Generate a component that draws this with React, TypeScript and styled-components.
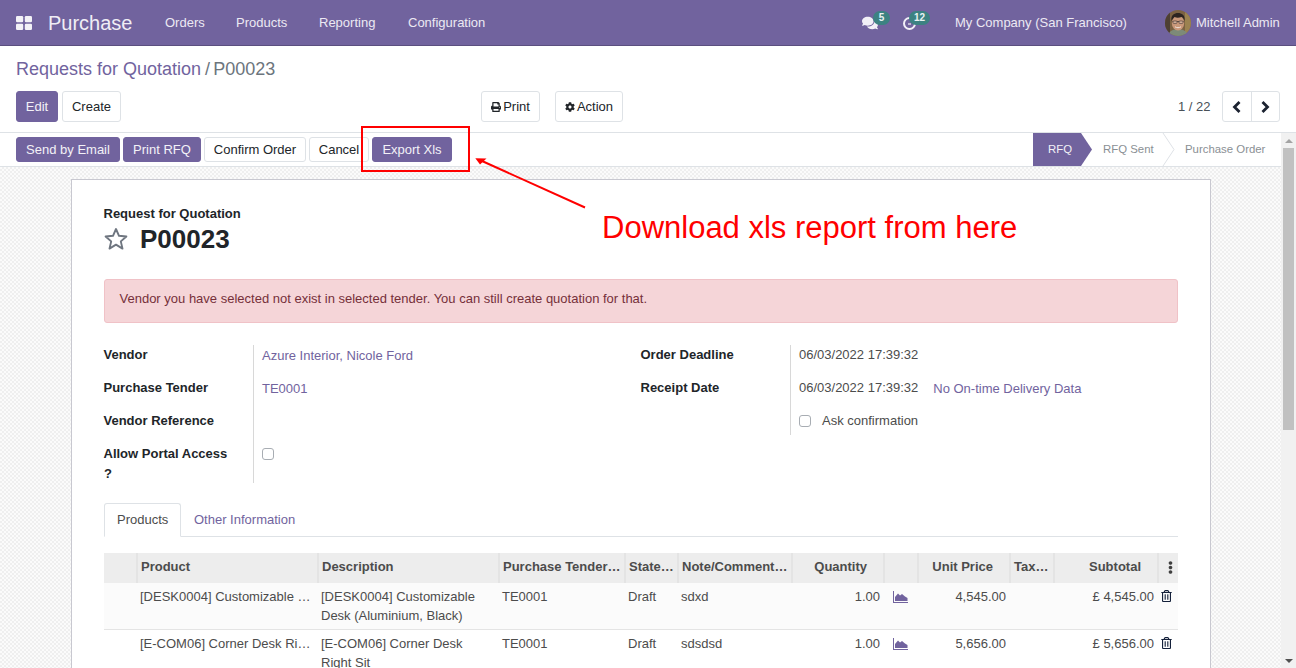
import React from "react";
import styled, { createGlobalStyle, css } from "styled-components";
import { FaPrint, FaCog, FaRegTrashAlt, FaEllipsisV, FaComments } from "react-icons/fa";

const PURPLE = "#71639e";
const TEXT = "#4c4c4c";

const Global = createGlobalStyle`
  html, body { margin: 0; padding: 0; height: 668px; overflow: hidden; background: #fff; }
  body { font-family: "Liberation Sans", Arial, sans-serif; font-size: 13px; line-height: 1.5; color: ${TEXT}; }
  * { box-sizing: border-box; }
`;

const Page = styled.div`
  position: relative;
  width: 1296px;
  height: 668px;
  overflow: hidden;
`;

const Navbar = styled.header`
  height: 46px;
  background: ${PURPLE};
  border-bottom: 1px solid #5b4f7f;
  color: #fff;
  display: flex;
  align-items: center;
  position: relative;
`;
const AppsIcon = styled.svg`
  width: 16px;
  height: 14px;
  margin-left: 16px;
  margin-top: 1px;
  fill: #fff;
  opacity: 0.92;
`;
const Brand = styled.span`
  font-size: 20px;
  margin-left: 16px;
  width: 117px;
  color: #f0eef5;
`;
const NavItem = styled.span<{ $w: number }>`
  width: ${(p) => p.$w}px;
  color: #ece9f3;
  white-space: nowrap;
`;
const NavRight = styled.div`
  position: absolute;
  inset: 0;
  pointer-events: none;
`;
const NavIcon = styled.span<{ $x: number }>`
  position: absolute;
  left: ${(p) => p.$x}px;
  top: 15px;
  display: flex;
  color: #f2f0f7;
`;
const Badge = styled.span<{ $x: number; $w: number }>`
  position: absolute;
  left: ${(p) => p.$x}px;
  top: 11px;
  width: ${(p) => p.$w}px;
  height: 14px;
  border-radius: 7px;
  background: #3c8282;
  color: #e9f3f3;
  font-size: 10px;
  font-weight: 700;
  line-height: 13px;
  text-align: center;
`;
const NavText = styled.span<{ $x: number }>`
  position: absolute;
  left: ${(p) => p.$x}px;
  top: 13px;
  color: #ece9f3;
  white-space: nowrap;
`;
const Avatar = styled.svg`
  position: absolute;
  left: 1165px;
  top: 10px;
  width: 26px;
  height: 26px;
`;

const ControlPanel = styled.section`
  height: 87px;
  padding: 11px 16px 0;
  border-bottom: 1px solid #dee2e6;
  position: relative;
`;
const Breadcrumb = styled.div`
  font-size: 18px;
  line-height: 25px;
  height: 34px;
  white-space: nowrap;
`;
const CrumbLink = styled.span`
  color: ${PURPLE};
`;
const CrumbSep = styled.span`
  color: #6c757d;
  margin: 0 3px 0 4px;
`;
const CrumbCurrent = styled.span`
  color: #6c757d;
`;
const ButtonRow = styled.div`
  display: flex;
  align-items: flex-start;
  gap: 4px;
`;
const Btn = styled.button<{ $primary?: boolean; $h?: number; $w: number }>`
  font: inherit;
  height: ${(p) => p.$h ?? 31}px;
  width: ${(p) => p.$w}px;
  padding: 0;
  border-radius: 3px;
  white-space: nowrap;
  display: inline-flex;
  align-items: center;
  justify-content: center;
  gap: 2px;
  ${(p) =>
    p.$primary
      ? css`
          background: ${PURPLE};
          border: 1px solid ${PURPLE};
          color: #f3f1f7;
        `
      : css`
          background: #fff;
          border: 1px solid #dee2e6;
          color: #212529;
        `}
`;
const ActionGroup = styled.div`
  position: absolute;
  left: 481px;
  top: 45px;
  display: flex;
  gap: 15px;
`;
const Pager = styled.div`
  position: absolute;
  left: 1178px;
  top: 45px;
  display: flex;
  align-items: center;
  height: 31px;
`;
const PagerValue = styled.span`
  width: 44px;
  color: #495057;
`;
const PagerGroup = styled.div`
  display: flex;
  width: 58px;
  height: 31px;
  border: 1px solid #dee2e6;
  border-radius: 3px;
`;
const PagerBtn = styled.span<{ $divider?: boolean }>`
  flex: 1;
  display: flex;
  align-items: center;
  justify-content: center;
  color: #212529;
  ${(p) => p.$divider && "border-right: 1px solid #dee2e6;"}
`;
const ChevronSvg = styled.svg`
  width: 10px;
  height: 12px;
  fill: none;
  stroke: #1b2230;
  stroke-width: 2.8;
`;

const Scroller = styled.div`
  position: absolute;
  left: 0;
  top: 133px;
  width: 1281px;
  height: 535px;
  overflow: hidden;
  background-color: #fff;
`;
const StatusBar = styled.div`
  height: 34px;
  border-bottom: 1px solid #dee2e6;
  background: #fff;
  display: flex;
  justify-content: space-between;
  padding-left: 16px;
`;
const StatusButtons = styled.div`
  display: flex;
  gap: 3px;
  padding-top: 4px;
`;
const Stages = styled.div`
  display: flex;
  position: relative;
  width: 248px;
  height: 33px;
`;
const StagesArt = styled.svg`
  position: absolute;
  inset: 0;
  width: 248px;
  height: 33px;
`;
const Stage = styled.span<{ $x: number; $active?: boolean }>`
  position: absolute;
  left: ${(p) => p.$x}px;
  top: 7px;
  font-size: 11.4px;
  line-height: 18px;
  white-space: nowrap;
  color: ${(p) => (p.$active ? "#f3f1f7" : "#8a8f94")};
`;
const SheetBg = styled.div`
  height: 501px;
  padding: 12px 70px 0 71px;
  background-color: #fff;
  background-image: repeating-conic-gradient(#efefef 0 25%, #fbfbfb 0 50%);
  background-size: 4px 4px;
`;
const Sheet = styled.main`
  width: 1140px;
  height: 560px;
  background: #fff;
  border: 1px solid #c8c8d0;
  padding: 24px 32px 0;
`;
const TitleLabel = styled.div`
  font-weight: 700;
  color: #212529;
  line-height: 19px;
  margin-left: -0.5px;
`;
const TitleRow = styled.div`
  display: flex;
  align-items: center;
  height: 32px;
`;
const StarSvg = styled.svg`
  width: 24px;
  height: 24px;
  fill: none;
  stroke: #6f7680;
  stroke-width: 1.9;
  stroke-linejoin: round;
  margin-top: -1px;
`;
const TitleName = styled.h1`
  margin: 0 0 0 12px;
  font-size: 26px;
  font-weight: 700;
  line-height: 32px;
  color: #212529;
`;
const Alert = styled.div`
  margin-top: 24px;
  height: 44px;
  background: #f5d5d8;
  border: 1px solid #f0c2c7;
  border-radius: 3px;
  padding: 9px 15px 9px 14.5px;
  color: #76303a;
`;
const FormGrid = styled.div`
  display: flex;
  margin-top: 22px;
`;
const FormCol = styled.div<{ $w: number; $labelW: number }>`
  width: ${(p) => p.$w}px;
  display: grid;
  grid-template-columns: ${(p) => p.$labelW}px 1fr;
  align-content: start;
`;
const Label = styled.div<{ $short?: boolean }>`
  font-weight: 700;
  color: #212529;
  padding: 0 16px 0 0;
  min-height: ${(p) => (p.$short ? 24 : 33)}px;
  line-height: 19.5px;
  border-right: 1px solid #d8d8d8;
  text-indent: -0.5px;
`;
const Value = styled.div<{ $short?: boolean }>`
  padding: 0 0 0 8px;
  min-height: ${(p) => (p.$short ? 24 : 33)}px;
  line-height: 20px;
  display: flex;
  gap: 15px;
  white-space: nowrap;
`;
const LinkValue = styled.span`
  color: ${PURPLE};
  position: relative;
  top: 1px;
`;
const Check = styled.span`
  display: inline-block;
  width: 12px;
  height: 12px;
  margin-top: 4px;
  border: 1px solid #a8adb3;
  border-radius: 3px;
  background: #fff;
`;
const CheckLabel = styled.span`
  margin-left: -4px;
`;
const Tabs = styled.nav`
  display: flex;
  margin-top: 20px;
  height: 34px;
  border-bottom: 1px solid #dee2e6;
`;
const Tab = styled.span<{ $active?: boolean }>`
  height: 34px;
  padding: 6px 12px;
  white-space: nowrap;
  border: 1px solid ${(p) => (p.$active ? "#dee2e6" : "transparent")};
  border-bottom-color: ${(p) => (p.$active ? "#fff" : "transparent")};
  border-radius: 3px 3px 0 0;
  color: ${(p) => (p.$active ? TEXT : PURPLE)};
  background: ${(p) => (p.$active ? "#fff" : "transparent")};
  width: ${(p) => (p.$active ? "77px" : "auto")};
`;
const Table = styled.table`
  margin-top: 16px;
  width: 1074px;
  table-layout: fixed;
  border-collapse: collapse;
`;
const Col = styled.col<{ $w: number }>`
  width: ${(p) => p.$w}px;
`;
const Th = styled.th<{ $right?: boolean; $pr?: number }>`
  height: 30px;
  background: #ededed;
  padding: 0 ${(p) => p.$pr ?? (p.$right ? 16 : 2)}px 2px 3px;
  text-align: ${(p) => (p.$right ? "right" : "left")};
  font-weight: 700;
  color: ${TEXT};
  white-space: nowrap;
  overflow: hidden;
  text-overflow: ellipsis;
  border-left: 2px solid #e4e4e4;
  &:first-child {
    border-left: 0;
  }
`;
const Tr = styled.tr<{ $tinted?: boolean }>`
  background: ${(p) => (p.$tinted ? "#fbfbfb" : "#fff")};
  border-bottom: 1px solid #e4e4e4;
`;
const Td = styled.td<{ $right?: boolean; $nowrap?: boolean }>`
  vertical-align: top;
  padding: 4px ${(p) => (p.$right ? "4px" : "3px")} 4px 3px;
  line-height: 19px;
  text-align: ${(p) => (p.$right ? "right" : "left")};
  color: ${TEXT};
  ${(p) =>
    p.$nowrap &&
    css`
      white-space: nowrap;
      overflow: hidden;
      text-overflow: ellipsis;
    `}
`;
const ChartSvg = styled.svg`
  width: 15px;
  height: 12px;
  margin: 4px 0 0 6px;
  display: block;
  fill: ${PURPLE};
`;
const TrashIcon = styled(FaRegTrashAlt)`
  width: 11px;
  height: 12px;
  color: #14203a;
  display: block;
  margin: 3px 0 0 0;
`;
const KebabIcon = styled(FaEllipsisV)`
  width: 13px;
  height: 13px;
  color: #3f3f3f;
  display: block;
  margin-left: 2px;
`;

const ScrollTrack = styled.div`
  position: absolute;
  left: 1281px;
  top: 133px;
  width: 15px;
  height: 535px;
  background: #f1f1f1;
`;
const ScrollThumb = styled.div`
  position: absolute;
  left: 2px;
  top: 15px;
  width: 11px;
  height: 282px;
  background: #c1c1c1;
`;
const ScrollArrow = styled.span<{ $down?: boolean }>`
  position: absolute;
  left: 4px;
  width: 0;
  height: 0;
  border-left: 4px solid transparent;
  border-right: 4px solid transparent;
  ${(p) =>
    p.$down
      ? css`
          bottom: 5px;
          border-top: 4px solid #505050;
        `
      : css`
          top: 6px;
          border-bottom: 4px solid #a3a3a3;
        `}
`;

const Highlight = styled.div`
  position: absolute;
  left: 361px;
  top: 126px;
  width: 109px;
  height: 46px;
  border: 2px solid #ff0000;
`;
const Arrow = styled.svg`
  position: absolute;
  left: 470px;
  top: 150px;
  width: 120px;
  height: 62px;
`;
const Annotation = styled.div`
  position: absolute;
  left: 602px;
  top: 210px;
  font-size: 31px;
  line-height: 36px;
  color: #ff0000;
  white-space: nowrap;
`;

const widths = [33, 181, 181, 126, 53, 114, 92, 34, 92, 44, 104, 20];

const rows = [
  {
    product: "[DESK0004] Customizable Desk (Aluminium, Black)",
    desc: "[DESK0004] Customizable Desk (Aluminium, Black)",
    note: "sdxd",
    price: "4,545.00",
    sub: "£ 4,545.00",
  },
  {
    product: "[E-COM06] Corner Desk Right Sit",
    desc: "[E-COM06] Corner Desk Right Sit",
    note: "sdsdsd",
    price: "5,656.00",
    sub: "£ 5,656.00",
  },
];

const ChartIcon = () => (
  <ChartSvg viewBox="0 0 15 12">
    <path d="M0 0H1V11H15V12H0z" />
    <path d="M2 10V6L5 2.5L7 4.5L9 3L12 5.5L14.5 7V10z" />
  </ChartSvg>
);

export default function App() {
  return (
    <Page>
      <Global />
      <Navbar>
        <AppsIcon viewBox="0 0 16 14">
          <rect x="0" y="0" width="7.2" height="6.2" rx="1.2" />
          <rect x="8.8" y="0" width="7.2" height="6.2" rx="1.2" />
          <rect x="0" y="7.8" width="7.2" height="6.2" rx="1.2" />
          <rect x="8.8" y="7.8" width="7.2" height="6.2" rx="1.2" />
        </AppsIcon>
        <Brand>Purchase</Brand>
        <NavItem $w={71}>Orders</NavItem>
        <NavItem $w={83}>Products</NavItem>
        <NavItem $w={89}>Reporting</NavItem>
        <NavItem $w={90}>Configuration</NavItem>
        <NavRight>
          <NavIcon $x={862}>
            <FaComments size={16} />
          </NavIcon>
          <Badge $x={873} $w={17}>5</Badge>
          <NavIcon $x={902}>
            <svg width="14" height="16" viewBox="0 0 14 16" fill="none" stroke="#f2f0f7" strokeWidth="2">
              <circle cx="7.5" cy="8.5" r="5.5" />
              <path d="M6 9h3" strokeWidth="1.2" />
            </svg>
          </NavIcon>
          <Badge $x={909} $w={21}>12</Badge>
          <NavText $x={955}>My Company (San Francisco)</NavText>
          <Avatar viewBox="0 0 26 26">
            <defs>
              <clipPath id="av">
                <circle cx="13" cy="13" r="13" />
              </clipPath>
            </defs>
            <g clipPath="url(#av)">
              <rect width="26" height="26" fill="#7c6242" />
              <rect x="20" width="6" height="26" fill="#9b8250" />
              <rect width="5" height="26" fill="#4d3f33" />
              <path d="M3 26c1-5 5-7 10-7s9 2 10 7z" fill="#7d8a78" />
              <ellipse cx="13" cy="13" rx="6.2" ry="7.5" fill="#c9987a" />
              <path d="M6.5 11c-1-6 3-8 6.5-8s7.5 2 6.5 8c-1-3-2-4-3-4-2.5 1-5 1-7 0-1 1-2 2-3 4z" fill="#2c2420" />
              <path d="M7.5 11.5h11" stroke="#3a3230" strokeWidth="0.7" />
              <rect x="8" y="11" width="4" height="2.4" rx="0.8" fill="#d9b49c" stroke="#3a3230" strokeWidth="0.6" />
              <rect x="14" y="11" width="4" height="2.4" rx="0.8" fill="#d9b49c" stroke="#3a3230" strokeWidth="0.6" />
              <path d="M10 16.8c2 1.2 4 1.2 6 0" stroke="#f1e3da" strokeWidth="1" fill="none" />
            </g>
          </Avatar>
          <NavText $x={1196}>Mitchell Admin</NavText>
        </NavRight>
      </Navbar>

      <ControlPanel>
        <Breadcrumb>
          <CrumbLink>Requests for Quotation</CrumbLink>
          <CrumbSep>/</CrumbSep>
          <CrumbCurrent>P00023</CrumbCurrent>
        </Breadcrumb>
        <ButtonRow>
          <Btn $primary $w={42}>Edit</Btn>
          <Btn $w={59}>Create</Btn>
        </ButtonRow>
        <ActionGroup>
          <Btn $w={59}>
            <FaPrint size={10} /> Print
          </Btn>
          <Btn $w={68}>
            <FaCog size={10} /> Action
          </Btn>
        </ActionGroup>
        <Pager>
          <PagerValue>1 / 22</PagerValue>
          <PagerGroup>
            <PagerBtn $divider>
              <ChevronSvg viewBox="0 0 10 12">
                <path d="M7.5 1L2.5 6L7.5 11" />
              </ChevronSvg>
            </PagerBtn>
            <PagerBtn>
              <ChevronSvg viewBox="0 0 10 12">
                <path d="M2.5 1L7.5 6L2.5 11" />
              </ChevronSvg>
            </PagerBtn>
          </PagerGroup>
        </Pager>
      </ControlPanel>

      <Scroller>
        <StatusBar>
          <StatusButtons>
            <Btn $primary $h={25} $w={104}>Send by Email</Btn>
            <Btn $primary $h={25} $w={78}>Print RFQ</Btn>
            <Btn $h={25} $w={102}>Confirm Order</Btn>
            <Btn $h={25} $w={60}>Cancel</Btn>
            <Btn $primary $h={25} $w={80}>Export Xls</Btn>
          </StatusButtons>
          <Stages>
            <StagesArt viewBox="0 0 248 33">
              <path d="M0 0H48L59 16.5L48 33H0z" fill={PURPLE} />
              <path d="M130 0L141 16.5L130 33" fill="none" stroke="#dee2e6" />
            </StagesArt>
            <Stage $x={15} $active>RFQ</Stage>
            <Stage $x={70}>RFQ Sent</Stage>
            <Stage $x={152}>Purchase Order</Stage>
          </Stages>
        </StatusBar>
        <SheetBg>
          <Sheet>
            <TitleLabel>Request for Quotation</TitleLabel>
            <TitleRow>
              <StarSvg viewBox="0 0 24 24">
                <path d="M12 2l3 6.8 7.4.7-5.6 4.9 1.7 7.2L12 17.6 5.5 21.6l1.7-7.2L1.6 9.5l7.4-.7z" />
              </StarSvg>
              <TitleName>P00023</TitleName>
            </TitleRow>
            <Alert>Vendor you have selected not exist in selected tender. You can still create quotation for that.</Alert>
            <FormGrid>
              <FormCol $w={537} $labelW={150}>
                <Label>Vendor</Label>
                <Value><LinkValue>Azure Interior, Nicole Ford</LinkValue></Value>
                <Label>Purchase Tender</Label>
                <Value><LinkValue>TE0001</LinkValue></Value>
                <Label>Vendor Reference</Label>
                <Value />
                <Label>Allow Portal Access ?</Label>
                <Value><Check /></Value>
              </FormCol>
              <FormCol $w={537} $labelW={150}>
                <Label>Order Deadline</Label>
                <Value>06/03/2022 17:39:32</Value>
                <Label>Receipt Date</Label>
                <Value>
                  06/03/2022 17:39:32
                  <LinkValue>No On-time Delivery Data</LinkValue>
                </Value>
                <Label $short />
                <Value $short>
                  <Check />
                  <CheckLabel>Ask confirmation</CheckLabel>
                </Value>
              </FormCol>
            </FormGrid>
            <Tabs>
              <Tab $active>Products</Tab>
              <Tab>Other Information</Tab>
            </Tabs>
            <Table>
              <colgroup>
                {widths.map((w, i) => (
                  <Col key={i} $w={w} />
                ))}
              </colgroup>
              <thead>
                <tr>
                  <Th />
                  <Th>Product</Th>
                  <Th>Description</Th>
                  <Th>Purchase Tender Status</Th>
                  <Th>State of Tender</Th>
                  <Th>Note/Comments here</Th>
                  <Th $right>Quantity</Th>
                  <Th />
                  <Th $right>Unit Price</Th>
                  <Th $pr={4}>Taxes</Th>
                  <Th $right>Subtotal</Th>
                  <Th><KebabIcon /></Th>
                </tr>
              </thead>
              <tbody>
                {rows.map((r, i) => (
                  <Tr key={r.note} $tinted={i === 0}>
                    <Td />
                    <Td $nowrap>{r.product}</Td>
                    <Td>{r.desc}</Td>
                    <Td>TE0001</Td>
                    <Td>Draft</Td>
                    <Td>{r.note}</Td>
                    <Td $right>1.00</Td>
                    <Td><ChartIcon /></Td>
                    <Td $right>{r.price}</Td>
                    <Td />
                    <Td $right>{r.sub}</Td>
                    <Td><TrashIcon /></Td>
                  </Tr>
                ))}
              </tbody>
            </Table>
          </Sheet>
        </SheetBg>
      </Scroller>

      <ScrollTrack>
        <ScrollArrow />
        <ScrollThumb />
        <ScrollArrow $down />
      </ScrollTrack>

      <Highlight />
      <Arrow viewBox="0 0 120 62">
        <path d="M115 57.5L12 11" stroke="#ff0000" strokeWidth="2" fill="none" />
        <path d="M5.3 8.3L16.5 8.5L10 14.5z" fill="#ff0000" />
      </Arrow>
      <Annotation>Download xls report from here</Annotation>
    </Page>
  );
}
